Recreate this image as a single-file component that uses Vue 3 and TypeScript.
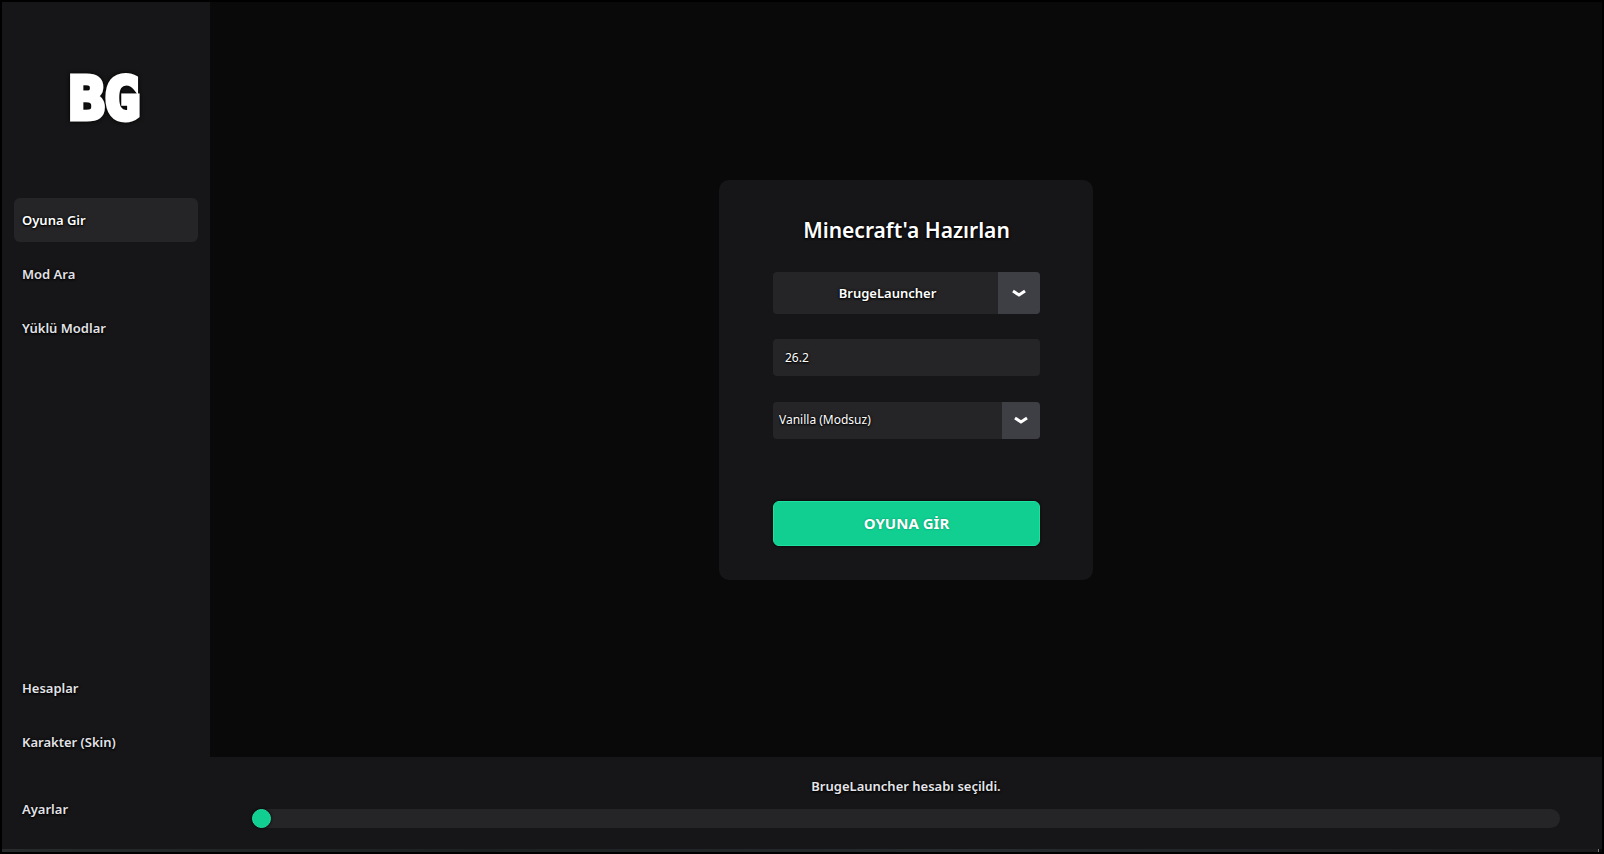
<script setup lang="ts">
import { computed, ref } from 'vue'

interface NavItem {
  id: string
  label: string
}

const primaryNav: NavItem[] = [
  { id: 'play', label: 'Oyuna Gir' },
  { id: 'search', label: 'Mod Ara' },
  { id: 'installed', label: 'Yüklü Modlar' },
]
const secondaryNav: NavItem[] = [
  { id: 'accounts', label: 'Hesaplar' },
  { id: 'skin', label: 'Karakter (Skin)' },
]

const current = ref('play')
const accounts = ['BrugeLauncher']
const account = ref(accounts[0])
const version = ref('26.2')
const loaders = ['Vanilla (Modsuz)', 'Fabric', 'Forge']
const loader = ref(loaders[0])
const progress = ref(0)

const status = computed(() => `${account.value} hesabı seçildi.`)
</script>

<template>
  <div class="window">
    <div class="body">
      <nav class="sidebar" aria-label="Menü">
        <svg class="logo" viewBox="0 0 80 58" role="img" aria-label="BG">
          <text x="3" y="51">BG</text>
        </svg>
        <div class="group">
          <button
            v-for="item in primaryNav"
            :key="item.id"
            type="button"
            class="nav-item"
            :class="{ active: current === item.id }"
            @click="current = item.id"
          >
            {{ item.label }}
          </button>
        </div>
        <div class="group bottom">
          <button
            v-for="item in secondaryNav"
            :key="item.id"
            type="button"
            class="nav-item"
            :class="{ active: current === item.id }"
            @click="current = item.id"
          >
            {{ item.label }}
          </button>
        </div>
        <button
          type="button"
          class="nav-item settings"
          :class="{ active: current === 'settings' }"
          @click="current = 'settings'"
        >
          Ayarlar
        </button>
      </nav>

      <div class="content">
        <main class="stage">
          <form class="card" @submit.prevent>
            <h1>Minecraft'a Hazırlan</h1>
            <div class="picker account">
              <select v-model="account" aria-label="Hesap">
                <option v-for="name in accounts" :key="name">{{ name }}</option>
              </select>
              <span class="arrow">
                <svg viewBox="0 0 16 10" aria-hidden="true"><path d="M2 3 8 7 14 3" /></svg>
              </span>
            </div>
            <input v-model="version" class="version" type="text" aria-label="Sürüm" />
            <div class="picker loader">
              <select v-model="loader" aria-label="Mod yükleyici">
                <option v-for="name in loaders" :key="name">{{ name }}</option>
              </select>
              <span class="arrow">
                <svg viewBox="0 0 16 10" aria-hidden="true"><path d="M2 3 8 7 14 3" /></svg>
              </span>
            </div>
            <button type="submit" class="play">OYUNA GİR</button>
          </form>
        </main>

        <footer class="status">
          <p id="status-text">{{ status }}</p>
          <div
            class="track"
            role="progressbar"
            aria-labelledby="status-text"
            aria-valuemin="0"
            aria-valuemax="100"
            :aria-valuenow="progress"
          >
            <div class="fill" :style="{ width: progress + '%' }"></div>
          </div>
        </footer>
      </div>
    </div>
    <div class="edge"></div>
  </div>
</template>

<style>
body {
  margin: 0;
  background: #000;
}
</style>

<style scoped>
.window {
  display: flex;
  flex-direction: column;
  box-sizing: border-box;
  min-height: 100vh;
  border: 2px solid #000;
  background: #090909;
  color: #fff;
  font-family: "Noto Sans", "Open Sans", sans-serif;
  font-size: 13px;
  line-height: 18px;
  text-shadow: 0 0 3px #000, 0 1px 2px #000;
}

button,
input,
select {
  box-sizing: border-box;
  margin: 0;
  border: 0;
  color: inherit;
  font: inherit;
  text-shadow: inherit;
}

button {
  cursor: pointer;
}

.body {
  display: flex;
  flex: 1;
}

.sidebar {
  display: flex;
  flex-direction: column;
  box-sizing: border-box;
  width: 208px;
  padding: 66px 12px 18px;
  background: #161618;
}

.logo {
  align-self: center;
  width: 80px;
  height: 58px;
  margin-bottom: 72px;
  overflow: visible;
  filter: drop-shadow(0 0 2px #000);
}

.logo text {
  fill: #fff;
  stroke: #fff;
  stroke-width: 5px;
  stroke-linejoin: miter;
  font-family: "DejaVu Sans Mono", monospace;
  font-size: 59px;
  font-weight: 700;
  text-shadow: none;
}

.group {
  display: flex;
  flex-direction: column;
  gap: 10px;
}

.bottom {
  margin-top: auto;
}

.settings {
  margin-top: 23px;
}

.nav-item {
  height: 44px;
  padding: 0 8px;
  border-radius: 6px;
  background: transparent;
  color: #e2e2e7;
  font-weight: 600;
  text-align: left;
}

.nav-item.active {
  background: #252527;
  color: #fff;
}

.content {
  display: flex;
  flex: 1;
  flex-direction: column;
  min-width: 0;
}

.stage {
  display: flex;
  flex: 1;
  align-items: center;
  justify-content: center;
}

.card {
  display: flex;
  flex-direction: column;
  box-sizing: border-box;
  width: 374px;
  padding: 34px 53px 34px 54px;
  border-radius: 10px;
  background: #161618;
}

h1 {
  margin: 0 0 26px;
  font-size: 21px;
  font-weight: 600;
  line-height: 32px;
  text-align: center;
}

.picker {
  display: grid;
  grid-template-columns: 1fr auto;
  overflow: hidden;
  border-radius: 4px;
  background: #252527;
}

.picker select {
  grid-row: 1;
  grid-column: 1 / 3;
  appearance: none;
  background: transparent;
}

.picker option {
  background: #252527;
}

.arrow {
  display: flex;
  grid-row: 1;
  grid-column: 2;
  align-items: center;
  justify-content: center;
  background: #3e3f45;
  pointer-events: none;
}

.arrow svg {
  width: 16px;
  height: 10px;
}

.arrow path {
  fill: none;
  stroke: #fff;
  stroke-width: 3;
  stroke-linecap: butt;
  stroke-linejoin: miter;
}

.account {
  height: 42px;
}

.account select {
  padding: 0 42px 0 4px;
  font-weight: 600;
  text-align: center;
  text-align-last: center;
}

.account .arrow {
  width: 42px;
}

.version {
  height: 37px;
  margin: 25px 0 26px;
  padding: 0 12px;
  border-radius: 4px;
  background: #252527;
  font-size: 12px;
}

.loader {
  height: 37px;
}

.loader select {
  padding: 0 38px 0 6px;
  font-size: 12px;
}

.loader .arrow {
  width: 38px;
}

.play {
  height: 45px;
  margin-top: 62px;
  border: 1px solid #1ee0a0;
  border-radius: 6px;
  background: #10cf91;
  box-shadow: 0 0 3px #000;
  font-size: 15px;
  font-weight: 700;
  text-shadow: 0 0 2px #0a8a60;
}

.status {
  padding: 20px 42px 21px;
  background: #161618;
  color: #e6e6ea;
  font-weight: 600;
  text-align: center;
}

.status p {
  margin: 0 0 14px;
}

.track {
  height: 19px;
  border-radius: 10px;
  background: #252527;
}

.fill {
  box-sizing: border-box;
  min-width: 19px;
  height: 19px;
  border: 1px solid #1ee0a0;
  border-radius: 10px;
  background: #10cf91;
  box-shadow: 0 0 3px #000;
}

.edge {
  height: 3px;
  border-right: 1px solid #777;
  margin-right: 3px;
  background: linear-gradient(90deg, #272b2c, #1d2021 30%, #272c2e 60%, #1b1b1d);
}
</style>
